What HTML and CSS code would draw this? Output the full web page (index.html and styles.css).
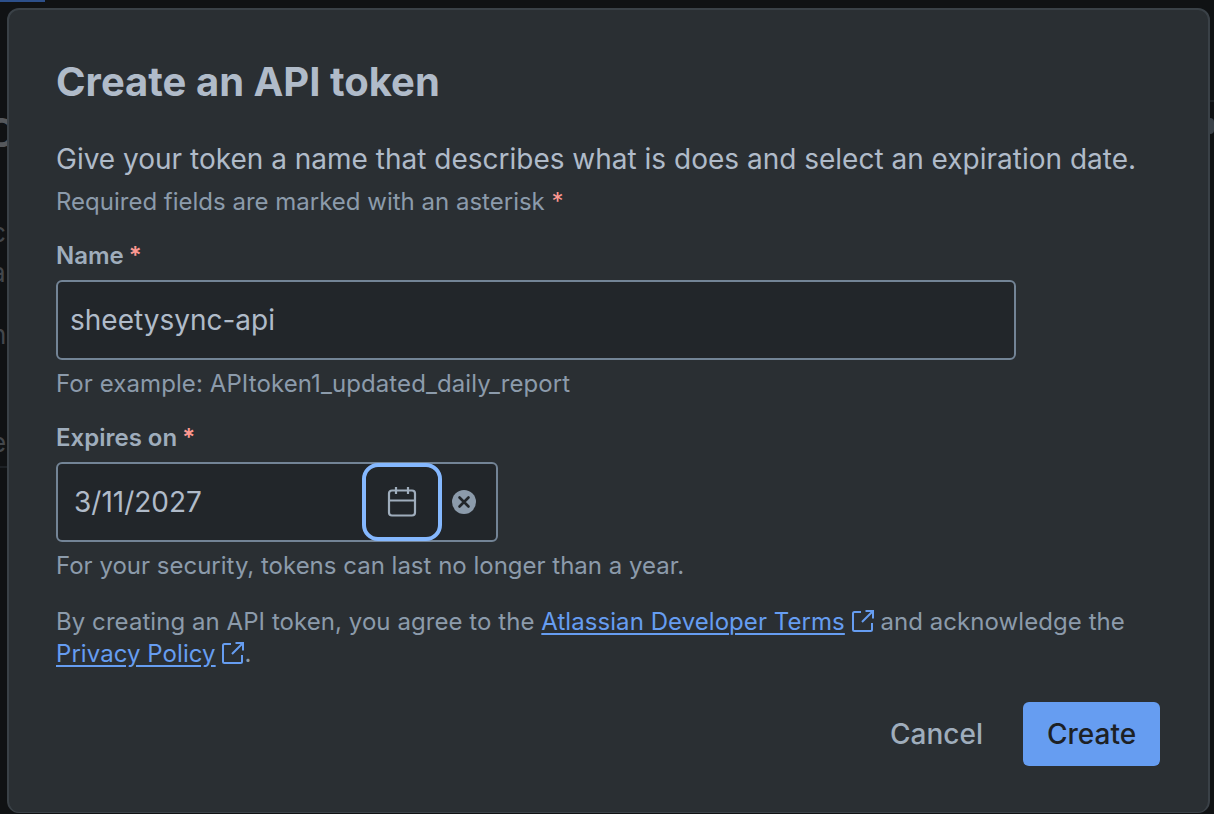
FILE: index.html
```html
<!DOCTYPE html>
<html lang="en">
<head>
    <meta charset="UTF-8">
    <meta name="viewport" content="width=device-width, initial-scale=1.0">
    <title>Create an API token</title>
    <link rel="stylesheet" href="styles.css">
</head>
<body>
    <div class="backdrop">
        <div class="tab-marker"></div>
        <span class="ghost ghost-c">C</span>
        <span class="ghost ghost-t">c</span>
        <span class="ghost ghost-a">a</span>
        <span class="ghost ghost-n">n</span>
        <span class="ghost ghost-e">e</span>
        <div class="ghost-line ghost-line-left"></div>
        <div class="ghost-line ghost-line-right"></div>
        <div class="ghost-knob"></div>
    </div>
    <section class="modal">
        <h1 class="modal-title">Create an API token</h1>
        <p class="intro">Give your token a name that describes what is does and select an expiration date.</p>
        <p class="required-note">Required fields are marked with an asterisk <span class="asterisk">*</span></p>

        <label class="field-label label-name">Name<span class="asterisk">*</span></label>
        <div class="text-input">sheetysync-api</div>
        <p class="hint hint-name">For example: APItoken1_updated_daily_report</p>

        <label class="field-label label-expires">Expires on<span class="asterisk">*</span></label>
        <div class="date-input">
            <span class="date-value">3/11/2027</span>
            <span class="calendar-btn">
                <svg width="30" height="30" viewBox="0 0 30 30" fill="none" stroke="#9fadbc" stroke-width="2.200">
                    <rect x="2" y="3.500" width="26" height="25" rx="3"/>
                    <path d="M2 13.500h26M9 0v7M21 0v7"/>
                </svg>
            </span>
            <span class="clear-btn">
                <svg width="24" height="24" viewBox="0 0 24 24">
                    <circle cx="12" cy="12" r="12" fill="#8c9bab"/>
                    <path d="M7.500 7.500l9 9M16.500 7.500l-9 9" stroke="#22262a" stroke-width="2.600" stroke-linecap="round"/>
                </svg>
            </span>
        </div>
        <p class="hint">For your security, tokens can last no longer than a year.</p>

        <p class="terms">By creating an API token, you agree to the <a class="link" href="#">Atlassian Developer Terms</a> <svg class="ext-icon" width="22" height="22" viewBox="0 0 22 22" fill="none" stroke="#669df1" stroke-width="2"><path d="M9 2H2.500a1.500 1.500 0 0 0-1.500 1.500v16a1.500 1.500 0 0 0 1.500 1.500h16a1.500 1.500 0 0 0 1.500-1.500V13"/><path d="M10 12L20.500 1.500M13.500 1H21v7.500"/></svg> and acknowledge the <a class="link" href="#">Privacy Policy</a> <svg class="ext-icon" width="22" height="22" viewBox="0 0 22 22" fill="none" stroke="#669df1" stroke-width="2"><path d="M9 2H2.500a1.500 1.500 0 0 0-1.500 1.500v16a1.500 1.500 0 0 0 1.500 1.500h16a1.500 1.500 0 0 0 1.500-1.500V13"/><path d="M10 12L20.500 1.500M13.500 1H21v7.500"/></svg>.</p>

        <div class="actions">
            <button class="btn btn-cancel">Cancel</button>
            <button class="btn btn-create">Create</button>
        </div>
    </section>
</body>
</html>
```

FILE: styles.css
```css
* {
    box-sizing: border-box;
}
html, body {
    height: 100%;
}
body {
    margin: 0;
    padding: 8px 4px 0 7px;
    background-color: #101214;
    font-family: Inter, "Liberation Sans", sans-serif;
    overflow: hidden;
}
.backdrop {
    position: absolute;
    inset: 0;
    overflow: hidden;
}
.tab-marker {
    height: 2px;
    width: 45px;
    background: #2c4f8a;
}
.ghost {
    position: absolute;
    left: -9px;
    color: #43474c;
    font-size: 26px;
    line-height: 30px;
}
.ghost-c { top: 113px; font-size: 40px; font-weight: 600; left: -14px; line-height: 40px; color: #55585c; }
.ghost-t { top: 218px; }
.ghost-a { top: 258px; }
.ghost-n { top: 320px; }
.ghost-e { top: 428px; }
.ghost-line {
    position: absolute;
    height: 2px;
    background: #1d2125;
}
.ghost-line-left { left: 0; width: 7px; top: 466px; }
.ghost-line-right { right: 0; width: 4px; top: 100px; }
.ghost-knob {
    position: absolute;
    right: 0;
    top: 118px;
    width: 4px;
    height: 16px;
    border-radius: 0 8px 8px 0;
    background: #3b4249;
}
.modal {
    position: relative;
    height: 805px;
    padding: 0 48px 0 47px;
    background: #2a2f33;
    border: 2px solid #3a4147;
    border-width: 2px 2px 1px 2px;
    border-radius: 12px;
}
.modal-title {
    margin: 0;
    padding-top: 49px;
    font-size: 40px;
    line-height: 46px;
    font-weight: 700;
    color: #b0bbc9;
}
.intro {
    margin: 36px 0 0;
    font-size: 28px;
    line-height: 36px;
    color: #b0bbc9;
    white-space: nowrap;
}
.required-note {
    margin: 9px 0 0;
    font-size: 24px;
    line-height: 32px;
    color: #8c9bab;
}
.asterisk {
    color: #fd9891;
}
.field-label {
    display: block;
    font-size: 24px;
    line-height: 32px;
    font-weight: 600;
    color: #9fadbc;
}
.field-label .asterisk {
    margin-left: 5px;
}
.label-name {
    margin-top: 22px;
}
.label-expires {
    margin-top: 22px;
}
.text-input {
    width: 960px;
    height: 80px;
    margin-top: 8px;
    padding: 0 12px;
    display: flex;
    align-items: center;
    background: #22262a;
    border: 2px solid #738496;
    border-radius: 6px;
    font-size: 28px;
    color: #b0bbc9;
}
.hint {
    margin: 8px 0 0;
    font-size: 24px;
    line-height: 32px;
    color: #8c9bab;
}
.hint-name {
    letter-spacing: 0.09px;
}
.date-input {
    width: 442px;
    height: 80px;
    margin-top: 8px;
    padding-left: 16px;
    display: flex;
    align-items: center;
    background: #22262a;
    border: 2px solid #738496;
    border-radius: 6px;
    font-size: 28px;
    color: #b0bbc9;
}
.date-value {
    width: 288px;
}
.calendar-btn {
    width: 80px;
    height: 78px;
    display: flex;
    align-items: center;
    justify-content: center;
    border: 4px solid #85b8ff;
    border-radius: 16px;
    background: #22262a;
}
.clear-btn {
    margin-left: 10px;
    display: flex;
}
.terms {
    margin: 24px 0 0;
    width: 1100px;
    font-size: 24px;
    line-height: 32px;
    letter-spacing: 0.06px;
    color: #8c9bab;
}
.link {
    color: #669df1;
    text-decoration: underline;
    text-underline-offset: 3px;
}
.ext-icon {
    vertical-align: -2px;
}
.actions {
    display: flex;
    justify-content: flex-end;
    align-items: center;
    gap: 16px;
    margin-top: 32px;
}
.btn {
    height: 64px;
    padding: 0 24px;
    border: none;
    border-radius: 6px;
    font-family: inherit;
    font-size: 28px;
    font-weight: 500;
}
.btn-cancel {
    background: transparent;
    color: #9fadbc;
}
.btn-create {
    background: #669df1;
    color: #1d2125;
    width: 137px;
}
```
